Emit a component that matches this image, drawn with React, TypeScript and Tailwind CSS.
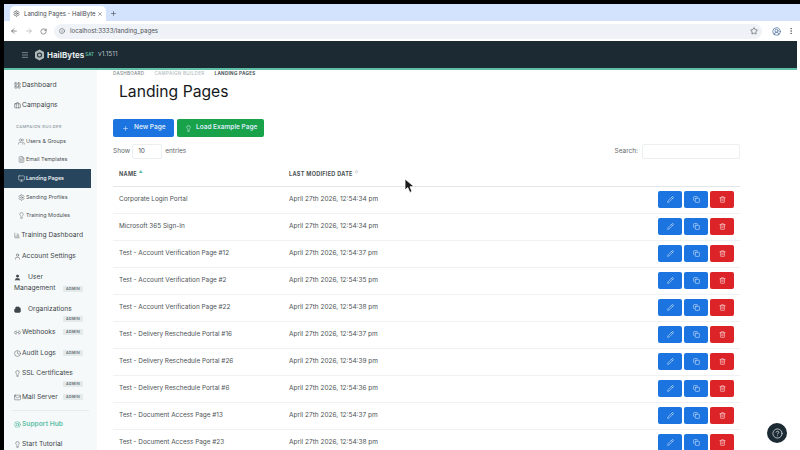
import React from "react";
import {
  ArrowLeft,
  ArrowRight,
  RotateCw,
  Info,
  Star,
  CircleUserRound,
  EllipsisVertical,
  Settings,
  X,
  Plus,
  Menu,
  LayoutGrid,
  Briefcase,
  Users,
  FileText,
  Monitor,
  Lightbulb,
  BarChart3,
  User,
  Building2,
  Link2,
  Clock,
  Mail,
  LifeBuoy,
  Pencil,
  Copy,
  Trash2,
  CircleHelp,
} from "lucide-react";

const rows = [
  ["Corporate Login Portal", "April 27th 2026, 12:54:34 pm"],
  ["Microsoft 365 Sign-In", "April 27th 2026, 12:54:34 pm"],
  ["Test - Account Verification Page #12", "April 27th 2026, 12:54:37 pm"],
  ["Test - Account Verification Page #2", "April 27th 2026, 12:54:35 pm"],
  ["Test - Account Verification Page #22", "April 27th 2026, 12:54:38 pm"],
  ["Test - Delivery Reschedule Portal #16", "April 27th 2026, 12:54:37 pm"],
  ["Test - Delivery Reschedule Portal #26", "April 27th 2026, 12:54:39 pm"],
  ["Test - Delivery Reschedule Portal #6", "April 27th 2026, 12:54:36 pm"],
  ["Test - Document Access Page #13", "April 27th 2026, 12:54:37 pm"],
  ["Test - Document Access Page #23", "April 27th 2026, 12:54:38 pm"],
];

const AdminBadge = () => (
  <span className="w-[20px] h-[6px] bg-[#e4e9ea] text-[#5d6b70] text-[3.6px] font-semibold tracking-[0.4px] leading-[6px] text-center rounded-[1px]">
    ADMIN
  </span>
);

const SubItem = ({ icon: Icon, label, h }: { icon: React.ElementType; label: string; h: string }) => (
  <div className={`flex items-center gap-[1px] pl-[14px] text-[5.4px] whitespace-nowrap text-[#4d5356] ${h}`}>
    <Icon size={7} strokeWidth={1.5} />
    <span>{label}</span>
  </div>
);

const TopItem = ({ icon: Icon, label, h, badge }: { icon: React.ElementType; label: string; h: string; badge?: boolean }) => (
  <div className={`flex items-center pl-[10px] pr-[14px] text-[6.7px] whitespace-nowrap text-[#40474b] ${h}`}>
    <Icon size={7} strokeWidth={1.6} />
    <span className="ml-[1px]">{label}</span>
    {badge && (
      <span className="ml-auto flex">
        <AdminBadge />
      </span>
    )}
  </div>
);

const ActionButton = ({ color, children }: { color: string; children: React.ReactNode }) => (
  <div className={`w-[24px] h-[17px] rounded-[2px] flex items-center justify-center text-white/80 ${color}`}>
    {children}
  </div>
);

export default function App() {
  return (
    <div
      className="w-[800px] h-[450px] overflow-hidden bg-black pt-[4px] pl-[4px] flex flex-col relative"
      style={{ fontFamily: "Inter, 'Noto Sans', sans-serif" }}
    >
      {/* Browser tabs */}
      <div className="h-[17px] bg-[#d3e3fd] flex items-end pl-[6px] shrink-0">
        <div className="w-[96px] h-[15px] bg-white rounded-t-[5px] flex items-center px-[3px] text-[6px] text-[#45494e]">
          <Settings size={7} strokeWidth={2} />
          <span className="ml-[4px] whitespace-nowrap">Landing Pages - HailByte</span>
          <X size={6} strokeWidth={2} className="ml-auto" />
        </div>
        <Plus size={7} strokeWidth={2} className="ml-[4px] mb-[4px] text-[#45494e]" />
      </div>

      {/* Browser toolbar */}
      <div className="h-[20px] bg-white flex items-center shrink-0 pl-[6px] pr-[5px] text-[#51555a]">
        <ArrowLeft size={8} strokeWidth={2} />
        <ArrowRight size={8} strokeWidth={2} className="ml-[7px] text-[#a9adb2]" />
        <RotateCw size={7} strokeWidth={2} className="ml-[7px]" />
        <div className="ml-[7px] flex-1 h-[15px] bg-[#eff3f8] rounded-full flex items-center pl-[5px] pr-[4px]">
          <Info size={6} strokeWidth={2} />
          <span className="ml-[5px] text-[6.2px] text-[#4b4f54]">localhost:3333/landing_pages</span>
          <Star size={8} strokeWidth={2} className="ml-auto" />
        </div>
        <CircleUserRound size={9} strokeWidth={2} className="ml-[10px] text-[#4f6f9e]" />
        <EllipsisVertical size={8} strokeWidth={2} className="ml-[6px]" />
      </div>

      <div className="flex-1 flex flex-col bg-white min-h-0 pr-[3px]">
        {/* App header */}
        <div className="h-[29px] bg-[#1b2a33] border-b-2 border-[#5fbfa6] flex items-center pl-[17px] text-white shrink-0">
          <Menu size={8} strokeWidth={2} className="text-[#a9b3b8]" />
          <svg width="11" height="12" viewBox="0 0 22 24" className="ml-[5px]">
            <path d="M11 1 L20 6 V18 L11 23 L2 18 V6 Z" fill="#aeb9b8" />
            <circle cx="11" cy="12" r="5" fill="#1b2a33" />
            <circle cx="11" cy="12" r="3" fill="#aeb9b8" />
          </svg>
          <span className="ml-[2px] text-[8px] font-bold text-[#e6ecec]">HailBytes</span>
          <span className="ml-[1px] text-[4.5px] font-semibold text-[#5fbfa6] mt-[2px]">SAT</span>
          <span className="ml-[4px] text-[6.5px] text-[#b4bec2]">v1.1511</span>
        </div>

        <div className="flex-1 flex min-h-0">
          {/* Sidebar */}
          <aside className="w-[93px] bg-[#f6f9fa] shrink-0 pt-[5px] overflow-hidden">
            <TopItem icon={LayoutGrid} label="Dashboard" h="h-[20px]" />
            <TopItem icon={Briefcase} label="Campaigns" h="h-[20px]" />
            <div className="h-[15px] pl-[12px] flex items-end text-[4px] tracking-[0.4px] font-medium text-[#8b989d] whitespace-nowrap">
              CAMPAIGN BUILDER
            </div>
            <SubItem icon={Users} label="Users & Groups" h="h-[18px] mt-[2px]" />
            <SubItem icon={FileText} label="Email Templates" h="h-[19px]" />
            <div className="h-[19px] w-[87px] bg-[#27455c] text-white flex items-center gap-[1px] pl-[14px] text-[5.4px] font-medium whitespace-nowrap">
              <Monitor size={7} strokeWidth={1.5} />
              <span>Landing Pages</span>
            </div>
            <SubItem icon={Settings} label="Sending Profiles" h="h-[18px]" />
            <SubItem icon={Lightbulb} label="Training Modules" h="h-[19px]" />
            <TopItem icon={BarChart3} label="Training Dashboard" h="h-[21px]" />
            <TopItem icon={User} label="Account Settings" h="h-[21px]" />
            <div className="h-[27px] pl-[10px] pr-[14px] text-[6.7px] leading-[11px] text-[#40474b] pt-[5px]">
              <div className="flex items-center">
                <User size={7} strokeWidth={2} fill="currentColor" />
                <span className="ml-[7px]">User</span>
              </div>
              <div className="flex items-center justify-between">
                <span>Management</span>
                <AdminBadge />
              </div>
            </div>
            <div className="h-[28px] pl-[10px] pr-[14px] text-[6.7px] text-[#40474b] pt-[10px]">
              <div className="flex items-center leading-[10px]">
                <Building2 size={7} strokeWidth={2} fill="currentColor" />
                <span className="ml-[7px]">Organizations</span>
              </div>
              <div className="flex justify-end mt-[2px]">
                <AdminBadge />
              </div>
            </div>
            <TopItem icon={Link2} label="Webhooks" h="h-[20px]" badge />
            <TopItem icon={Clock} label="Audit Logs" h="h-[22px]" badge />
            <div className="h-[23px] pl-[10px] pr-[14px] text-[6.7px] text-[#40474b] pt-[4px]">
              <div className="flex items-center leading-[11px] whitespace-nowrap">
                <Lightbulb size={7} strokeWidth={1.6} />
                <span className="ml-[1px]">SSL Certificates</span>
              </div>
              <div className="flex justify-end mt-[2px]">
                <AdminBadge />
              </div>
            </div>
            <TopItem icon={Mail} label="Mail Server" h="h-[20px]" badge />
            <div className="mx-[8px] mt-[3px] border-t border-[#e6ebec]" />
            <div className="h-[26px] flex items-center pl-[10px] text-[6.7px] font-semibold text-[#5fbfa6] whitespace-nowrap">
              <LifeBuoy size={7} strokeWidth={2} />
              <span className="ml-[1px]">Support Hub</span>
            </div>
            <TopItem icon={Lightbulb} label="Start Tutorial" h="h-[14px]" />
          </aside>

          {/* Main content */}
          <main className="flex-1 min-w-0 pl-[16px] pr-[57px]">
            <div className="flex items-center h-[7px] mt-[1px] text-[4.6px] tracking-[0.3px] font-medium whitespace-nowrap">
              <span className="text-[#7f8a8f]">DASHBOARD</span>
              <span className="ml-[10px] text-[#b5bdc0]">CAMPAIGN BUILDER</span>
              <span className="ml-[10px] font-bold text-[#4b565b]">LANDING PAGES</span>
            </div>
            <h1 className="ml-[6px] mt-[2px] text-[15.7px] leading-[24px] font-normal text-[#16191b]">Landing Pages</h1>
            <div className="flex gap-[3px] mt-[15px] text-[#dbe9f8] text-[6.5px] font-semibold">
              <div className="w-[61px] h-[18px] bg-[#1b74e0] rounded-[2px] flex items-center pl-[9px]">
                <Plus size={7} strokeWidth={2} />
                <span className="ml-[5px]">New Page</span>
              </div>
              <div className="w-[87px] h-[18px] bg-[#18a34a] rounded-[2px] flex items-center pl-[8px]">
                <Lightbulb size={7} strokeWidth={2} />
                <span className="ml-[4px]">Load Example Page</span>
              </div>
            </div>

            <div className="flex items-center justify-between mt-[7px] text-[6.5px] text-[#63686b]">
              <div className="flex items-center">
                <span>Show</span>
                <div className="ml-[2px] w-[30px] h-[15px] border border-[#eceff0] rounded-[2px] flex items-center pl-[5px] text-[#4d5356]">10</div>
                <span className="ml-[3px]">entries</span>
              </div>
              <div className="flex items-center">
                <span>Search:</span>
                <div className="ml-[4px] w-[98px] h-[15px] border border-[#eceff0] rounded-[2px]" />
              </div>
            </div>

            <table className="w-[627px] mt-[2px] border-collapse text-[6.4px] text-[#4d5356]">
              <thead>
                <tr className="h-[25px] border-b border-[#e3e6e7] text-[5.5px] font-bold tracking-[0.3px] text-left text-[#4d5356]">
                  <th className="w-[176px] pl-[6px] font-bold">
                    NAME <span className="text-[#5fbfa6] align-super text-[4px]">▲</span>
                  </th>
                  <th className="pl-0 font-bold">
                    LAST MODIFIED DATE <span className="text-[#b5bdc0] align-super text-[4px]">◇</span>
                  </th>
                  <th />
                </tr>
              </thead>
              <tbody>
                {rows.map(([name, date]) => (
                  <tr key={name} className="h-[27px] border-b border-[#eff1f2]">
                    <td className="pl-[6px]">{name}</td>
                    <td className="text-[6.5px]">{date}</td>
                    <td>
                      <div className="flex justify-end gap-[2px] pr-[6px]">
                        <ActionButton color="bg-[#1b74e0]">
                          <Pencil size={7} strokeWidth={2} />
                        </ActionButton>
                        <ActionButton color="bg-[#1b74e0]">
                          <Copy size={7} strokeWidth={2} />
                        </ActionButton>
                        <ActionButton color="bg-[#dc2428]">
                          <Trash2 size={7} strokeWidth={2} />
                        </ActionButton>
                      </div>
                    </td>
                  </tr>
                ))}
              </tbody>
            </table>
          </main>
        </div>
      </div>

      {/* Floating help button */}
      <div className="absolute left-[767px] top-[423px] w-[20px] h-[20px] rounded-full bg-[#1b2a33] flex items-center justify-center text-[#c4ccd0]">
        <CircleHelp size={11} strokeWidth={2} />
      </div>

      {/* Mouse pointer */}
      <svg width="12" height="16" viewBox="0 0 12 16" className="absolute left-[404px] top-[178px]">
        <path d="M1 1 L1 12 L3.8 9.6 L5.8 14.4 L8 13.4 L6 8.8 L10 8.6 Z" fill="#1a1a1a" stroke="#ffffff" strokeWidth="0.8" />
      </svg>
    </div>
  );
}
